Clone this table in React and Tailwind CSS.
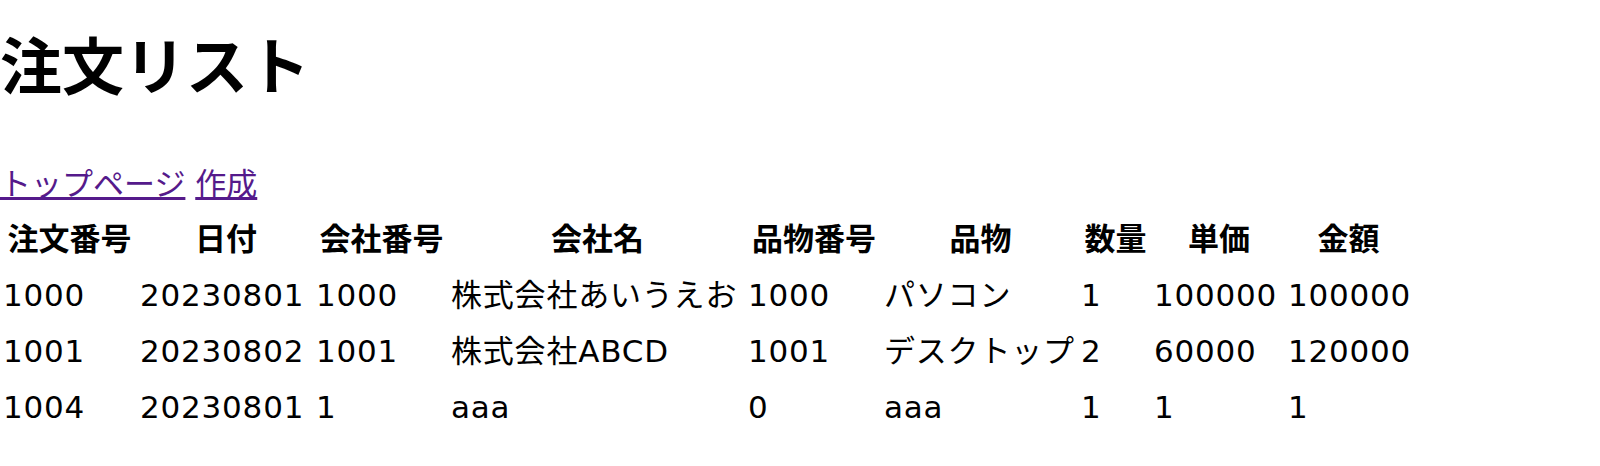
const orders = [
  ["1000", "20230801", "1000", "株式会社あいうえお", "1000", "パソコン", "1", "100000", "100000"],
  ["1001", "20230802", "1001", "株式会社ABCD", "1001", "デスクトップ", "2", "60000", "120000"],
  ["1004", "20230801", "1", "aaa", "0", "aaa", "1", "1", "1"],
];

const headers = [
  { label: "注文番号", w: "w-[135px]" },
  { label: "日付", w: "w-[174px]" },
  { label: "会社番号", w: "w-[133px]" },
  { label: "会社名", w: "w-[295px]" },
  { label: "品物番号", w: "w-[134px]" },
  { label: "品物", w: "w-[195px]" },
  { label: "数量", w: "w-[71px]" },
  { label: "単価", w: "w-[132px]" },
  { label: "金額", w: "w-[123px]" },
];

export default function App() {
  return (
    <div className="w-[1600px] h-[466px] bg-white text-black font-['DejaVu_Sans','Noto_Sans_CJK_JP',sans-serif] text-[31px] overflow-hidden">
      <h1 className="text-[62px] font-bold leading-[62px] pt-[38px] mb-[64px]">注文リスト</h1>
      <div className="leading-[40px] mb-[6px]">
        <a href="#" className="text-[#551A8B] underline">
          トップページ
        </a>{" "}
        <a href="#" className="text-[#551A8B] underline">
          作成
        </a>
      </div>
      <table className="table-fixed w-[1412px] border-separate border-spacing-[2px]">
        <thead>
          <tr className="h-[54px]">
            {headers.map((h) => (
              <th key={h.label} className={`${h.w} p-[1px] text-center font-bold`}>
                {h.label}
              </th>
            ))}
          </tr>
        </thead>
        <tbody>
          {orders.map((row) => (
            <tr key={row[0]} className="h-[54px]">
              {row.map((cell, i) => (
                <td key={i} className="p-[1px] text-left whitespace-nowrap tracking-[0.8px]">
                  {cell}
                </td>
              ))}
            </tr>
          ))}
        </tbody>
      </table>
    </div>
  );
}
